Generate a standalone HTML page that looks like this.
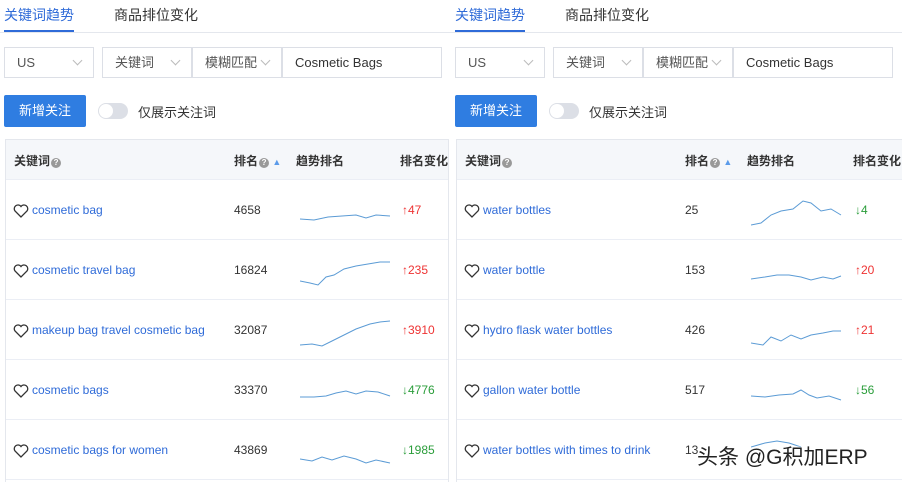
<!DOCTYPE html><html><head><meta charset="utf-8"><style>
body{margin:0;width:902px;height:482px;overflow:hidden;background:#fff;font-family:"Liberation Sans","Noto Sans CJK SC",sans-serif;font-size:12px;color:#333;position:relative}
.p{position:absolute;top:0;height:482px;overflow:hidden}
.a{position:absolute;white-space:nowrap}
.box{position:absolute;top:47px;height:31px;border:1px solid #dcdfe6;box-sizing:border-box;background:#fff;line-height:29px;padding-left:12px;color:#555;font-size:13px}
.chev{position:absolute;right:12px;top:9px;width:6px;height:6px;border-right:1px solid #bbb;border-bottom:1px solid #bbb;transform:rotate(45deg)}
.tbl{position:absolute;left:1px;top:139px;width:444px;height:360px;border:1px solid #e4e7ed;box-sizing:border-box}
.hd{position:absolute;left:0;top:0;right:0;height:39px;background:#f5f7fa;border-bottom:1px solid #ebeef5;font-weight:bold;color:#333}
.row{position:absolute;left:0;right:0;height:60px;border-bottom:1px solid #ebeef5}
.kw{color:#2f6bd8;left:26px;top:24px}
.heart{position:absolute;left:7px;top:25px}
.q{display:inline-block;width:10px;height:10px;border-radius:50%;background:#999;color:#fff;font-size:8px;line-height:10px;text-align:center;vertical-align:0px;margin-left:1px}
.up{color:#e33}.dn{color:#2a9d3a}
</style></head><body>

<div class="p" style="left:0;width:451px">
<div class="a" style="left:4px;top:5px;font-size:14px;color:#2f6bd8">关键词趋势</div>
<div class="a" style="left:114px;top:5px;font-size:14px;color:#333">商品排位变化</div>
<div class="a" style="left:4px;top:30px;width:70px;height:2px;background:#2f6bd8"></div>
<div class="a" style="left:0;top:32px;width:451px;height:1px;background:#e4e7ed"></div>
<div class="box" style="left:4px;width:90px">US<i class="chev"></i></div>
<div class="box" style="left:102px;width:90px">关键词<i class="chev"></i></div>
<div class="box" style="left:192px;width:90px">模糊匹配<i class="chev"></i></div>
<div class="box" style="left:282px;width:160px;color:#333">Cosmetic Bags</div>
<div class="a" style="left:4px;top:95px;width:82px;height:32px;background:#2f7de1;color:#fff;line-height:32px;text-align:center;border-radius:2px;font-size:13px">新增关注</div>
<div class="a" style="left:98px;top:103px;width:30px;height:16px;border-radius:8px;background:#dcdfe6"><div style="position:absolute;left:1px;top:1px;width:14px;height:14px;border-radius:50%;background:#fff"></div></div>
<div class="a" style="left:138px;top:102px;font-size:13px">仅展示关注词</div>
<div class="tbl" style="left:5px">
<div class="hd"><span class="a" style="left:8px;top:12px">关键词<span class="q">?</span></span><span class="a" style="left:228px;top:12px">排名<span class="q">?</span> <span style="color:#5b9bea;font-size:9px">▲</span></span><span class="a" style="left:290px;top:12px">趋势排名</span><span class="a" style="left:394px;top:12px">排名变化</span></div>
<div class="row" style="top:39px"><svg class="heart" width="16" height="14" viewBox="0 0 16 14"><path d="M8 13L2 7A3.3 3.3 0 0 1 8 2.5A3.3 3.3 0 0 1 14 7Z" fill="none" stroke="#333" stroke-width="1.3"/></svg><span class="a kw">cosmetic bag</span><span class="a" style="left:228px;top:24px">4658</span><svg class="a" style="left:294px;top:28px" width="92" height="20"><polyline points="0,12 14,13 28,10 42,9 56,8 66,11 76,8 90,9" fill="none" stroke="#5b9bd5"/></svg><span class="a up" style="left:396px;top:24px">↑47</span></div>
<div class="row" style="top:99px"><svg class="heart" width="16" height="14" viewBox="0 0 16 14"><path d="M8 13L2 7A3.3 3.3 0 0 1 8 2.5A3.3 3.3 0 0 1 14 7Z" fill="none" stroke="#333" stroke-width="1.3"/></svg><span class="a kw">cosmetic travel bag</span><span class="a" style="left:228px;top:24px">16824</span><svg class="a" style="left:294px;top:18px" width="92" height="32"><polyline points="0,24 10,26 18,28 26,20 34,18 44,12 56,9 68,7 80,5 90,5" fill="none" stroke="#5b9bd5"/></svg><span class="a up" style="left:396px;top:24px">↑235</span></div>
<div class="row" style="top:159px"><svg class="heart" width="16" height="14" viewBox="0 0 16 14"><path d="M8 13L2 7A3.3 3.3 0 0 1 8 2.5A3.3 3.3 0 0 1 14 7Z" fill="none" stroke="#333" stroke-width="1.3"/></svg><span class="a kw">makeup bag travel cosmetic bag</span><span class="a" style="left:228px;top:24px">32087</span><svg class="a" style="left:294px;top:18px" width="92" height="32"><polyline points="0,28 12,27 22,29 32,24 44,18 56,12 70,7 80,5 90,4" fill="none" stroke="#5b9bd5"/></svg><span class="a up" style="left:396px;top:24px">↑3910</span></div>
<div class="row" style="top:219px"><svg class="heart" width="16" height="14" viewBox="0 0 16 14"><path d="M8 13L2 7A3.3 3.3 0 0 1 8 2.5A3.3 3.3 0 0 1 14 7Z" fill="none" stroke="#333" stroke-width="1.3"/></svg><span class="a kw">cosmetic bags</span><span class="a" style="left:228px;top:24px">33370</span><svg class="a" style="left:294px;top:24px" width="92" height="20"><polyline points="0,14 14,14 26,13 36,10 46,8 56,11 66,8 78,9 90,13" fill="none" stroke="#5b9bd5"/></svg><span class="a dn" style="left:396px;top:24px">↓4776</span></div>
<div class="row" style="top:279px"><svg class="heart" width="16" height="14" viewBox="0 0 16 14"><path d="M8 13L2 7A3.3 3.3 0 0 1 8 2.5A3.3 3.3 0 0 1 14 7Z" fill="none" stroke="#333" stroke-width="1.3"/></svg><span class="a kw">cosmetic bags for women</span><span class="a" style="left:228px;top:24px">43869</span><svg class="a" style="left:294px;top:28px" width="92" height="22"><polyline points="0,12 12,14 22,10 32,13 44,9 56,12 66,16 76,13 90,16" fill="none" stroke="#5b9bd5"/></svg><span class="a dn" style="left:396px;top:24px">↓1985</span></div>
</div>
</div>

<div class="p" style="left:451px;width:451px">
<div class="a" style="left:4px;top:5px;font-size:14px;color:#2f6bd8">关键词趋势</div>
<div class="a" style="left:114px;top:5px;font-size:14px;color:#333">商品排位变化</div>
<div class="a" style="left:4px;top:30px;width:70px;height:2px;background:#2f6bd8"></div>
<div class="a" style="left:0;top:32px;width:451px;height:1px;background:#e4e7ed"></div>
<div class="box" style="left:4px;width:90px">US<i class="chev"></i></div>
<div class="box" style="left:102px;width:90px">关键词<i class="chev"></i></div>
<div class="box" style="left:192px;width:90px">模糊匹配<i class="chev"></i></div>
<div class="box" style="left:282px;width:160px;color:#333">Cosmetic Bags</div>
<div class="a" style="left:4px;top:95px;width:82px;height:32px;background:#2f7de1;color:#fff;line-height:32px;text-align:center;border-radius:2px;font-size:13px">新增关注</div>
<div class="a" style="left:98px;top:103px;width:30px;height:16px;border-radius:8px;background:#dcdfe6"><div style="position:absolute;left:1px;top:1px;width:14px;height:14px;border-radius:50%;background:#fff"></div></div>
<div class="a" style="left:138px;top:102px;font-size:13px">仅展示关注词</div>
<div class="tbl" style="left:5px;width:460px">
<div class="hd"><span class="a" style="left:8px;top:12px">关键词<span class="q">?</span></span><span class="a" style="left:228px;top:12px">排名<span class="q">?</span> <span style="color:#5b9bea;font-size:9px">▲</span></span><span class="a" style="left:290px;top:12px">趋势排名</span><span class="a" style="left:396px;top:12px">排名变化</span></div>
<div class="row" style="top:39px"><svg class="heart" width="16" height="14" viewBox="0 0 16 14"><path d="M8 13L2 7A3.3 3.3 0 0 1 8 2.5A3.3 3.3 0 0 1 14 7Z" fill="none" stroke="#333" stroke-width="1.3"/></svg><span class="a kw">water bottles</span><span class="a" style="left:228px;top:24px">25</span><svg class="a" style="left:294px;top:18px" width="92" height="34"><polyline points="0,28 10,26 20,18 30,14 42,12 52,4 60,6 70,14 80,12 90,18" fill="none" stroke="#5b9bd5"/></svg><span class="a dn" style="left:398px;top:24px">↓4</span></div>
<div class="row" style="top:99px"><svg class="heart" width="16" height="14" viewBox="0 0 16 14"><path d="M8 13L2 7A3.3 3.3 0 0 1 8 2.5A3.3 3.3 0 0 1 14 7Z" fill="none" stroke="#333" stroke-width="1.3"/></svg><span class="a kw">water bottle</span><span class="a" style="left:228px;top:24px">153</span><svg class="a" style="left:294px;top:28px" width="92" height="22"><polyline points="0,12 14,10 26,8 38,8 50,10 60,13 72,10 82,12 90,9" fill="none" stroke="#5b9bd5"/></svg><span class="a up" style="left:398px;top:24px">↑20</span></div>
<div class="row" style="top:159px"><svg class="heart" width="16" height="14" viewBox="0 0 16 14"><path d="M8 13L2 7A3.3 3.3 0 0 1 8 2.5A3.3 3.3 0 0 1 14 7Z" fill="none" stroke="#333" stroke-width="1.3"/></svg><span class="a kw">hydro flask water bottles</span><span class="a" style="left:228px;top:24px">426</span><svg class="a" style="left:294px;top:22px" width="92" height="28"><polyline points="0,22 12,24 20,16 30,20 40,14 50,18 60,14 72,12 82,10 90,10" fill="none" stroke="#5b9bd5"/></svg><span class="a up" style="left:398px;top:24px">↑21</span></div>
<div class="row" style="top:219px"><svg class="heart" width="16" height="14" viewBox="0 0 16 14"><path d="M8 13L2 7A3.3 3.3 0 0 1 8 2.5A3.3 3.3 0 0 1 14 7Z" fill="none" stroke="#333" stroke-width="1.3"/></svg><span class="a kw">gallon water bottle</span><span class="a" style="left:228px;top:24px">517</span><svg class="a" style="left:294px;top:24px" width="92" height="22"><polyline points="0,13 14,14 28,12 42,11 50,7 58,12 66,15 78,13 90,17" fill="none" stroke="#5b9bd5"/></svg><span class="a dn" style="left:398px;top:24px">↓56</span></div>
<div class="row" style="top:279px"><svg class="heart" width="16" height="14" viewBox="0 0 16 14"><path d="M8 13L2 7A3.3 3.3 0 0 1 8 2.5A3.3 3.3 0 0 1 14 7Z" fill="none" stroke="#333" stroke-width="1.3"/></svg><span class="a kw">water bottles with times to drink</span><span class="a" style="left:228px;top:24px">13</span><svg class="a" style="left:294px;top:18px" width="92" height="14"><polyline points="0,10 14,6 26,4 38,6 50,10" fill="none" stroke="#5b9bd5"/></svg></div>
</div>
</div>
<div class="a" style="left:697px;top:441px;font-size:21px;color:#222;text-shadow:0 0 2px #fff,0 0 2px #fff">头条 @G积加ERP</div>
</body></html>
